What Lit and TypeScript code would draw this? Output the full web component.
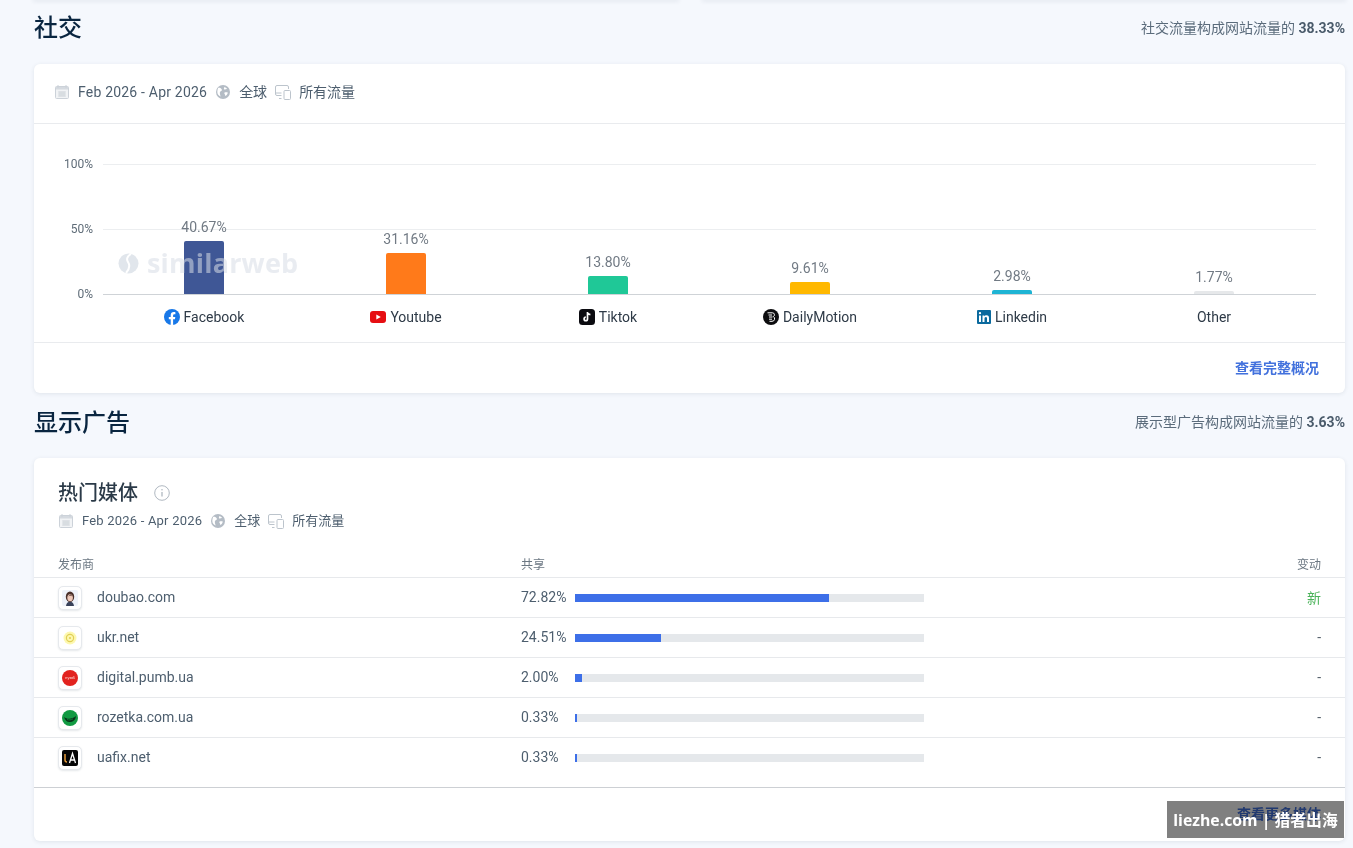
import { LitElement, html, css, svg } from "lit";
import { customElement } from "lit/decorators.js";

const calendar = svg`<svg class="mi" viewBox="0 0 14 14" width="14" height="14"><rect x="0.5" y="1.5" width="13" height="12" rx="1" fill="#f1f3f5" stroke="#ccd2d9"/><rect x="1" y="2" width="12" height="2.500" fill="#d5dae0"/><path d="M3 0v3M11 0v3" stroke="#ccd2d9"/><path d="M3 7h8M3 9h8M3 11h8M5 6.500v5M7 6.500v5M9 6.500v5" stroke="#c6cdd4" stroke-width=".7"/></svg>`;
const globe = svg`<svg class="mi" viewBox="0 0 14 14" width="14" height="14"><circle cx="7" cy="7" r="7" fill="#b4bcc5"/><path d="M2.200 2.800c1.500-.2 2.600.4 3.300 1.200.8.900.4 1.700-.5 2.100-.9.400-1.200 1.300-1.100 2.300.1.900.3 2.100.8 3.200C2.600 10.800 1.300 9 1.300 7c0-1.600.3-3.100.9-4.200zM8.400 2c1.100.3 2.100 1 2.700 1.800-.8.500-1.400.3-2 .6-.7.300-1.300-.2-1.200-.9.100-.5.300-1 .5-1.500zM8.600 7.400c1.100-.3 2.200-.2 3.200.2-.2 1.500-1 2.700-2.200 3.400-.7-.6-.5-1.400-.9-2-.4-.6-.5-1.400-.1-1.600z" fill="#fff"/></svg>`;
const devices = svg`<svg class="mi dev" viewBox="0 0 16 15" width="16" height="15" fill="none" stroke="#bcc4cc"><path d="M6.500 10.500H2a1.500 1.500 0 0 1-1.500-1.500V2A1.500 1.500 0 0 1 2 .5h10A1.500 1.500 0 0 1 13.500 2v2"/><path d="M4 13.500h2.500M.5 8h6"/><rect x="9" y="5.500" width="6.500" height="9" rx="1"/></svg>`;
const info = svg`<svg viewBox="0 0 16 16" width="16" height="16" fill="none" stroke="#b0b8c1"><circle cx="8" cy="8" r="7.300"/><path d="M8 7v4.500" stroke-width="1.300"/><circle cx="8" cy="4.800" r=".8" fill="#b0b8c1" stroke="none"/></svg>`;

const icons: Record<string, unknown> = {
  facebook: svg`<svg viewBox="0 0 16 16" width="16" height="16"><circle cx="8" cy="8" r="8" fill="#1878e8"/><path d="M6.700 16V10.300H4.800V8h1.900V6.200c0-2 1.200-3.100 3-3.100.8 0 1.700.15 1.700.15v2h-1c-1 0-1.300.6-1.300 1.250V8h2.200l-.35 2.300H9.100V16z" fill="#fff"/></svg>`,
  youtube: svg`<svg viewBox="0 0 16 12" width="16" height="12"><rect width="16" height="12" rx="3" fill="#e60e12"/><path d="M6.300 3.400 10.800 6l-4.500 2.600z" fill="#fff"/></svg>`,
  tiktok: svg`<svg viewBox="0 0 16 16" width="16" height="16"><rect width="16" height="16" rx="3.500" fill="#0b0b10"/><path d="M8.500 3v6.900a1.700 1.700 0 1 1-1.700-1.700M8.500 3c.2 1.500 1.300 2.500 2.900 2.700" fill="none" stroke="#fff" stroke-width="1.700"/></svg>`,
  dailymotion: svg`<svg viewBox="0 0 16 16" width="16" height="16"><circle cx="8" cy="8" r="8" fill="#0d0d0f"/><path d="M4.500 3.800h4.800a2 2 0 0 1 1 3.800 2.500 2.500 0 0 1-1.300 4.700H6.500M5.500 6h3.500M6 8h3.400M6 10.200h3" fill="none" stroke="#fff" stroke-width="1"/></svg>`,
  linkedin: svg`<svg viewBox="0 0 14 14" width="14" height="14"><rect width="14" height="14" rx="1" fill="#0b6a9e"/><path d="M2 5.400h2V12H2zM3 2a1.150 1.150 0 1 1 0 2.300A1.150 1.150 0 0 1 3 2zM5.500 5.400h1.900v.9c.4-.6 1.100-1.100 2.100-1.100 2 0 2.500 1.300 2.500 3V12h-2V8.700c0-.8-.1-1.700-1.100-1.700s-1.400.8-1.400 1.700V12h-2z" fill="#fff"/></svg>`,
  doubao: svg`<svg viewBox="0 0 16 16" width="16" height="16"><rect width="16" height="16" rx="2" fill="#eef2fa"/><path d="M4 16c.4-3 1.800-4.200 4-4.200s3.600 1.200 4 4.200z" fill="#39425a"/><ellipse cx="8" cy="6.800" rx="4.200" ry="5.300" fill="#4a302b"/><ellipse cx="8.100" cy="7.800" rx="2.800" ry="3.500" fill="#efc9ba"/><path d="M5.300 6.500c1-.4 2.900-1.500 3.600-2.300l1.600 2.500-1.500-1.300z" fill="#4a302b"/></svg>`,
  ukr: svg`<svg viewBox="0 0 16 16" width="16" height="16"><circle cx="8" cy="8" r="6.500" fill="#fdf8b0"/><circle cx="8" cy="8" r="3.600" fill="none" stroke="#e0cf55" stroke-width="1.200"/><circle cx="8" cy="8" r="1.100" fill="#e0cf55"/></svg>`,
  pumb: svg`<svg viewBox="0 0 16 16" width="16" height="16"><circle cx="8" cy="8" r="8" fill="#e2231f"/><text x="8" y="9.400" text-anchor="middle" font-size="4.200" font-family="Roboto, sans-serif" fill="#fbd3cf">пумб</text></svg>`,
  rozetka: svg`<svg viewBox="0 0 16 16" width="16" height="16"><circle cx="8" cy="8" r="8" fill="#119a42"/><path d="M2 7c3 2.500 8 2.500 12-1-.5 4-3 6-6.500 6C5 12 3 10 2 7z" fill="#07321a"/><path d="M5 9.500c2 .8 4 .5 6-.7" stroke="#0e7a35" fill="none"/></svg>`,
  uafix: svg`<svg viewBox="0 0 16 16" width="16" height="16"><rect width="16" height="16" rx="2" fill="#060606"/><path d="M3 4v6c0 1 .5 2 2 2" fill="none" stroke="#e59a3a" stroke-width="1.500"/><path d="M7.500 13 10.500 3.500 13.500 13M8.700 10h3.600" fill="none" stroke="#fff" stroke-width="1.300"/></svg>`,
};

const bars = [
  { name: "Facebook", icon: "facebook", value: 40.67, color: "#3f5796" },
  { name: "Youtube", icon: "youtube", value: 31.16, color: "#ff7a1a" },
  { name: "Tiktok", icon: "tiktok", value: 13.8, color: "#1fc897" },
  { name: "DailyMotion", icon: "dailymotion", value: 9.61, color: "#ffb800" },
  { name: "Linkedin", icon: "linkedin", value: 2.98, color: "#1eb4d4" },
  { name: "Other", icon: "", value: 1.77, color: "#e6e8ea" },
];

const rows = [
  { site: "doubao.com", icon: "doubao", share: 72.82, change: "新" },
  { site: "ukr.net", icon: "ukr", share: 24.51, change: "-" },
  { site: "digital.pumb.ua", icon: "pumb", share: 2.0, change: "-" },
  { site: "rozetka.com.ua", icon: "rozetka", share: 0.33, change: "-" },
  { site: "uafix.net", icon: "uafix", share: 0.33, change: "-" },
];

@customElement("app-root")
export class AppRoot extends LitElement {
  static styles = css`
    :host {
      display: block;
      position: relative;
      height: 848px;
      overflow: hidden;
      padding: 0 8px 0 34px;
      box-sizing: border-box;
      background: #f5f8fd;
      font-family: Roboto, "Noto Sans CJK SC", sans-serif;
      color: #3a4a5a;
      font-size: 14px;
    }
    .stubs { display: grid; grid-template-columns: 644px 642px; gap: 25px; height: 0; }
    .stub { height: 0; box-shadow: 0 0 4px 1px rgba(42, 62, 82, 0.14); }
    .head { display: flex; justify-content: space-between; align-items: center; }
    .head.first { height: 56px; margin-bottom: 8px; }
    .head.second { height: 60px; margin-bottom: 5px; }
    h2 { margin: 0; font-size: 24px; font-weight: 500; color: #092540; line-height: 32px; }
    .note { font-size: 14px; line-height: 20px; color: #5a6b7b; }
    .head.second .note { padding-bottom: 2px; }
    .note b { font-weight: 700; color: #4a5b6b; }
    .card {
      background: #fff;
      border-radius: 6px;
      box-shadow: 0 1px 4px rgba(42, 62, 82, 0.1);
    }
    .meta { display: flex; align-items: center; font-size: 14px; color: #4d5e6e; }
    .meta svg { flex: none; }
    .meta span { line-height: 20px; }
    .meta .range { margin: 0 9px 0 9px; letter-spacing: 0.2px; }
    .meta .geo { margin: 0 8px 0 9px; }
    .meta .traffic { margin-left: 8px; }
    .card-meta { height: 56px; padding: 0 0 3px 21px; border-bottom: 1px solid #e9ebee; }
    .chart { height: 218px; padding: 0 29px 0 30px; display: flex; flex-direction: column; }
    .plot { position: relative; height: 130px; margin-top: 40px; padding: 0 1px 0 39px; display: flex; align-items: flex-end; }
    .grid-line { position: absolute; left: 39px; right: 0; height: 1px; background: #eceef0; }
    .grid-line.zero { background: #cfd3d7; }
    .tick { position: absolute; left: 0; width: 29px; text-align: right; font-size: 12px; color: #5f6c78; line-height: 14px; transform: translateY(-7px); }
    .col { position: relative; flex: 1; display: flex; flex-direction: column; align-items: center; justify-content: flex-end; }
    .val { font-size: 14px; color: #717a84; line-height: 16px; margin-bottom: 6px; }
    .bar { width: 40px; border-radius: 2px 2px 0 0; }
    .watermark {
      position: absolute; left: 54px; top: 84px;
      display: flex; align-items: center; gap: 8px;
      font: 700 27px/30px "Open Sans", sans-serif;
      color: rgba(215, 221, 229, 0.55);
      letter-spacing: 0.2px;
    }
    .watermark svg { display: block; }
    .labels { display: flex; padding: 0 1px 0 39px; margin-top: 14px; }
    .label { flex: 1; display: flex; align-items: center; justify-content: center; gap: 4px; height: 18px; font-size: 14px; color: #2e3a47; }
    .foot { border-top: 1px solid #e9ebee; height: 48px; padding-bottom: 2px; display: flex; align-items: center; justify-content: flex-end; padding-right: 26px; font-size: 14px; font-weight: 700; color: #4271dd; }
    .media { padding-top: 21px; height: 383px; box-sizing: border-box; display: flex; flex-direction: column; }
    .media-title { display: flex; align-items: center; gap: 16px; padding-left: 24px; height: 28px; }
    .media-title h3 { margin: 0; font-size: 20px; font-weight: 500; color: #2b3a48; line-height: 28px; }
    .media-meta { padding-left: 25px; font-size: 13px; height: 22px; margin-top: 3px; }
    .media-meta .range { margin: 0 9px; }
    .thead, .row { display: grid; grid-template-columns: 463px 1fr auto; padding: 0 24px; align-items: center; }
    .thead { height: 18px; margin-top: 22px; padding-bottom: 5px; font-size: 12px; color: #6b7782; border-bottom: 1px solid #e7e9ec; }
    .row { height: 40px; box-sizing: border-box; border-bottom: 1px solid #e7e9ec; font-size: 14px; color: #4d5e6e; }
    .row.last { border-bottom: none; }
    .site { display: flex; align-items: center; gap: 15px; }
    .site > span:last-child, .pct, .chg { position: relative; top: -1px; }
    .fav { width: 24px; height: 24px; box-sizing: border-box; border-radius: 5px; background: #fff; border: 1px solid #e6e9ed; box-shadow: 0 1px 2px rgba(42, 62, 82, 0.12); display: flex; align-items: center; justify-content: center; }
    .share { display: flex; align-items: center; }
    .pct { width: 54px; }
    .track { width: 349px; height: 8px; background: #e5e8eb; }
    .fill { height: 100%; background: #3d6fe8; }
    .chg { text-align: right; color: #55606b; }
    .chg.new { color: #4bb35a; }
    .media-foot { margin-top: auto; border-top: 1px solid #cdd0d4; height: 50px; padding-bottom: 3px; padding-right: 24px; }
    .badge { position: absolute; left: 1167px; top: 801px; width: 177px; height: 36px; padding-bottom: 1px; color: #fff; display: flex; align-items: center; justify-content: center; font: 700 15.800px "Open Sans", "Noto Sans CJK SC", sans-serif; white-space: pre; }
    .badge::before { content: ""; position: absolute; inset: 0; background: #808080; mix-blend-mode: multiply; }
    .badge span { position: relative; }
  `;

  private meta(cls: string) {
    return html`<div class="meta ${cls}">
      ${calendar}<span class="range">Feb 2026 - Apr 2026</span>
      ${globe}<span class="geo">全球</span>
      ${devices}<span class="traffic">所有流量</span>
    </div>`;
  }

  render() {
    return html`
      <div class="stubs"><div class="stub"></div><div class="stub"></div></div>
      <div class="head first">
        <h2>社交</h2>
        <div class="note">社交流量构成网站流量的 <b>38.33%</b></div>
      </div>
      <div class="card">
        ${this.meta("card-meta")}
        <div class="chart">
          <div class="plot">
            <div class="grid-line" style="top:0"></div>
            <div class="grid-line" style="top:65px"></div>
            <div class="grid-line zero" style="top:130px"></div>
            <div class="tick" style="top:0">100%</div>
            <div class="tick" style="top:65px">50%</div>
            <div class="tick" style="top:130px">0%</div>
            ${bars.map(
              (b) => html`<div class="col">
                <div class="val">${b.value.toFixed(2)}%</div>
                <div class="bar" style="height:${Math.max(Math.round(b.value * 1.3), 3)}px;background:${b.color}"></div>
              </div>`
            )}
            <div class="watermark">
              <svg viewBox="0 0 21 21" width="21" height="21"><circle cx="10.500" cy="10.500" r="10" fill="rgba(215,221,229,.75)"/><path d="M13 1c-3.500 2-5 5-3 8 2 3 1.500 7-2 11" fill="none" stroke="#fff" stroke-width="2"/></svg>
              similarweb
            </div>
          </div>
          <div class="labels">
            ${bars.map(
              (b) => html`<div class="label">${b.icon ? icons[b.icon] : ""}<span>${b.name}</span></div>`
            )}
          </div>
        </div>
        <div class="foot">查看完整概况</div>
      </div>
      <div class="head second">
        <h2>显示广告</h2>
        <div class="note">展示型广告构成网站流量的 <b>3.63%</b></div>
      </div>
      <div class="card media">
        <div class="media-title"><h3>热门媒体</h3>${info}</div>
        ${this.meta("media-meta")}
        <div class="thead"><span>发布商</span><span>共享</span><span>变动</span></div>
        ${rows.map(
          (r, i) => html`<div class="row ${i === rows.length - 1 ? "last" : ""}">
            <div class="site"><span class="fav">${icons[r.icon]}</span><span>${r.site}</span></div>
            <div class="share">
              <span class="pct">${r.share.toFixed(2)}%</span>
              <div class="track"><div class="fill" style="width:${Math.max(r.share, 0.6)}%"></div></div>
            </div>
            <div class="chg ${r.change === "新" ? "new" : ""}">${r.change}</div>
          </div>`
        )}
        <div class="foot media-foot">查看更多媒体</div>
      </div>
      <div class="badge"><span>liezhe.com | 猎者出海</span></div>
    `;
  }
}
